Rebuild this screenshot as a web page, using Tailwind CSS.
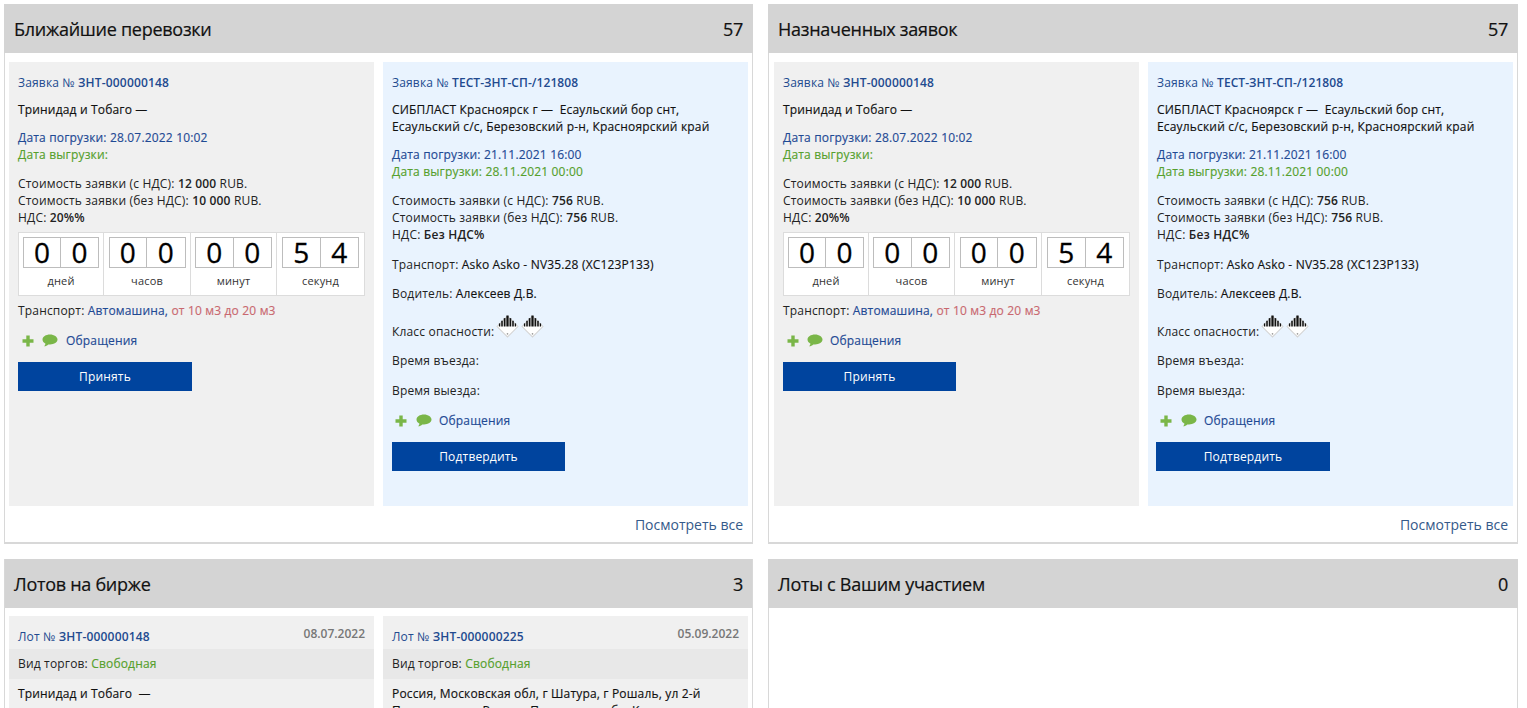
<!DOCTYPE html>
<html lang="ru">
<head>
    <meta charset="UTF-8">
    <meta name="viewport" content="width=device-width, initial-scale=1.0">
    <title>Панель</title>
    <script src="https://cdn.jsdelivr.net/npm/@tailwindcss/browser@4"></script>
</head>
<body class="bg-white h-[708px] overflow-hidden font-['Open_Sans',sans-serif] text-[12px] leading-[17px] tracking-[0.17px] text-[#222]">
    <svg class="hidden">
        <symbol id="plus" viewBox="0 0 12 12"><path d="M4.3 0.5h3.4v3.8h3.8v3.4H7.7v3.8H4.3V7.7H0.5V4.3h3.8z" fill="#7ab648"/></symbol>
        <symbol id="bubble" viewBox="0 0 16 13"><path d="M8 0.5C3.8 0.5 0.5 2.7 0.5 5.6c0 1.8 1.2 3.2 3 4.1-.2 1-.8 1.9-1.4 2.6 1.7-.2 3.1-.9 4.2-1.9.5.1 1.1.1 1.7.1 4.2 0 7.5-2.2 7.5-4.9S12.2.5 8 .5z" fill="#7ab648"/></symbol>
        <symbol id="hazard" viewBox="0 0 22 22">
            <path d="M11 1L21 11L11 21L1 11Z" fill="#fff" stroke="#d4d4d4" stroke-width="1"/>
            <g fill="#111">
                <rect x="9.9" y="0.5" width="2.2" height="10.5"/>
                <rect x="7.4" y="3" width="1.7" height="8"/>
                <rect x="12.9" y="3" width="1.7" height="8"/>
                <rect x="5" y="5.5" width="1.5" height="5.5"/>
                <rect x="15.5" y="5.5" width="1.5" height="5.5"/>
                <rect x="2.8" y="8" width="1.3" height="3"/>
                <rect x="17.9" y="8" width="1.3" height="3"/>
            </g>
            <circle cx="11" cy="18" r="0.8" fill="#999"/>
        </symbol>
    </svg>

    <div class="grid grid-cols-[749px_750px] gap-x-[15px] pl-[4px] pt-[4px]">
        <!-- Ближайшие перевозки -->
        <section class="h-[540px] border-x border-b-2 border-[#d8d8d8] flex flex-col">
            <header class="-mx-px h-[49px] bg-[#d4d4d4] flex items-center justify-between pl-[10px] pr-[10px] text-[18px] leading-[24px] tracking-[-0.27px] text-[#111] [-webkit-text-stroke:0.2px]">
                <h2>Ближайшие перевозки</h2><span>57</span>
            </header>
            <div class="grid grid-cols-[365px_365px] gap-x-[9px] pl-[4px] pt-[9px]">
                <article class="h-[444px] bg-[#f0f0f0] px-[9px] pt-[12px]">
                    <p class="text-[#224a8f]">Заявка № <b class="font-semibold">ЗНТ-000000148</b></p>
                    <p class="mt-[10px] text-[#111] [-webkit-text-stroke:0.15px]">Тринидад и Тобаго —</p>
                    <p class="mt-[11px] text-[#1f4a94] [-webkit-text-stroke:0.15px]">Дата погрузки: 28.07.2022 10:02</p>
                    <p class="text-[#55a02c] [-webkit-text-stroke:0.15px]">Дата выгрузки:</p>
                    <p class="mt-[12px]">Стоимость заявки (с НДС): <b class="font-semibold">12 000</b> RUB.</p>
                    <p>Стоимость заявки (без НДС): <b class="font-semibold">10 000</b> RUB.</p>
                    <p>НДС: <b class="font-semibold">20%%</b></p>
                    <div class="mt-[6px] w-[347px] h-[64px] bg-white border border-[#dcdcdc] grid grid-cols-[85px_87px_86px_87px] divide-x divide-[#dcdcdc]">
                        <div class="flex flex-col items-center pt-[4px]">
                            <div class="w-[76px] h-[31px] border border-[#bdbdbd] grid grid-cols-2 divide-x divide-[#bdbdbd] text-center text-[28px] leading-[29px] text-black [-webkit-text-stroke:0.3px]"><span>0</span><span>0</span></div>
                            <span class="mt-[4px] text-[11px] text-[#333]">дней</span>
                        </div>
                        <div class="flex flex-col items-center pt-[4px]">
                            <div class="w-[77px] h-[31px] border border-[#bdbdbd] grid grid-cols-2 divide-x divide-[#bdbdbd] text-center text-[28px] leading-[29px] text-black [-webkit-text-stroke:0.3px]"><span>0</span><span>0</span></div>
                            <span class="mt-[4px] text-[11px] text-[#333]">часов</span>
                        </div>
                        <div class="flex flex-col items-center pt-[4px]">
                            <div class="w-[77px] h-[31px] border border-[#bdbdbd] grid grid-cols-2 divide-x divide-[#bdbdbd] text-center text-[28px] leading-[29px] text-black [-webkit-text-stroke:0.3px]"><span>0</span><span>0</span></div>
                            <span class="mt-[4px] text-[11px] text-[#333]">минут</span>
                        </div>
                        <div class="flex flex-col items-center pt-[4px]">
                            <div class="w-[77px] h-[31px] border border-[#bdbdbd] grid grid-cols-2 divide-x divide-[#bdbdbd] text-center text-[28px] leading-[29px] text-black [-webkit-text-stroke:0.3px]"><span>5</span><span>4</span></div>
                            <span class="mt-[4px] text-[11px] text-[#333]">секунд</span>
                        </div>
                    </div>
                    <p class="mt-[6px]">Транспорт: <span class="text-[#1f4a94] [-webkit-text-stroke:0.15px]">Автомашина,</span> <span class="text-[#c9686f] [-webkit-text-stroke:0.15px]">от 10 м3 до 20 м3</span></p>
                    <div class="mt-[13px] flex items-center h-[17px]">
                        <svg class="ml-[4px] w-[12px] h-[12px]"><use href="#plus"/></svg>
                        <svg class="ml-[8px] w-[16px] h-[13px]"><use href="#bubble"/></svg>
                        <a class="ml-[8px] text-[#1f4a94] [-webkit-text-stroke:0.15px]">Обращения</a>
                    </div>
                    <button class="mt-[13px] block w-[174px] h-[29px] bg-[#00449e] text-white">Принять</button>
                </article>
                <article class="h-[444px] bg-[#e9f3fe] px-[9px] pt-[12px]">
                    <p class="text-[#224a8f]">Заявка № <b class="font-semibold tracking-[0.06px]">ТЕСТ-ЗНТ-СП-/121808</b></p>
                    <p class="mt-[10px] text-[#111] [-webkit-text-stroke:0.15px]">СИБПЛАСТ Красноярск г —&nbsp; Есаульский бор снт,<br>Есаульский с/с, Березовский р-н, Красноярский край</p>
                    <p class="mt-[11px] text-[#1f4a94] [-webkit-text-stroke:0.15px]">Дата погрузки: 21.11.2021 16:00</p>
                    <p class="text-[#55a02c] [-webkit-text-stroke:0.15px]">Дата выгрузки: 28.11.2021 00:00</p>
                    <p class="mt-[12px]">Стоимость заявки (с НДС): <b class="font-semibold">756</b> RUB.</p>
                    <p>Стоимость заявки (без НДС): <b class="font-semibold">756</b> RUB.</p>
                    <p>НДС: <b class="font-semibold">Без НДС%</b></p>
                    <p class="mt-[13px]">Транспорт: <span class="text-[#111] [-webkit-text-stroke:0.15px]">Asko Asko - NV35.28 (ХС123Р133)</span></p>
                    <p class="mt-[12px]">Водитель: <span class="text-[#111] [-webkit-text-stroke:0.15px]">Алексеев Д.В.</span></p>
                    <div class="mt-[5px] flex items-end h-[33px]">
                        <span>Класс опасности:</span>
                        <svg class="ml-[2px] mb-[2px] w-[23px] h-[23px]"><use href="#hazard"/></svg>
                        <svg class="ml-[2px] mb-[2px] w-[23px] h-[23px]"><use href="#hazard"/></svg>
                    </div>
                    <p class="mt-[12px]">Время въезда:</p>
                    <p class="mt-[13px]">Время выезда:</p>
                    <div class="mt-[13px] flex items-center h-[17px]">
                        <svg class="ml-[3px] w-[12px] h-[12px]"><use href="#plus"/></svg>
                        <svg class="ml-[9px] w-[16px] h-[13px]"><use href="#bubble"/></svg>
                        <a class="ml-[7px] text-[#1f4a94] [-webkit-text-stroke:0.15px]">Обращения</a>
                    </div>
                    <button class="mt-[13px] block w-[173px] h-[29px] bg-[#00449e] text-white">Подтвердить</button>
                </article>
            </div>
            <a class="mt-[9px] pr-[9px] text-right text-[14px] leading-[19px] tracking-normal text-[#355a8a]">Посмотреть все</a>
        </section>

        <!-- Назначенных заявок -->
        <section class="h-[540px] border-x border-b-2 border-[#d8d8d8] flex flex-col">
            <header class="-mx-px h-[49px] bg-[#d4d4d4] flex items-center justify-between pl-[10px] pr-[10px] text-[18px] leading-[24px] tracking-[-0.27px] text-[#111] [-webkit-text-stroke:0.2px]">
                <h2>Назначенных заявок</h2><span>57</span>
            </header>
            <div class="grid grid-cols-[365px_365px] gap-x-[9px] pl-[5px] pt-[9px]">
                <article class="h-[444px] bg-[#f0f0f0] px-[9px] pt-[12px]">
                    <p class="text-[#224a8f]">Заявка № <b class="font-semibold">ЗНТ-000000148</b></p>
                    <p class="mt-[10px] text-[#111] [-webkit-text-stroke:0.15px]">Тринидад и Тобаго —</p>
                    <p class="mt-[11px] text-[#1f4a94] [-webkit-text-stroke:0.15px]">Дата погрузки: 28.07.2022 10:02</p>
                    <p class="text-[#55a02c] [-webkit-text-stroke:0.15px]">Дата выгрузки:</p>
                    <p class="mt-[12px]">Стоимость заявки (с НДС): <b class="font-semibold">12 000</b> RUB.</p>
                    <p>Стоимость заявки (без НДС): <b class="font-semibold">10 000</b> RUB.</p>
                    <p>НДС: <b class="font-semibold">20%%</b></p>
                    <div class="mt-[6px] w-[347px] h-[64px] bg-white border border-[#dcdcdc] grid grid-cols-[85px_86px_87px_87px] divide-x divide-[#dcdcdc]">
                        <div class="flex flex-col items-center pt-[4px]">
                            <div class="w-[76px] h-[31px] border border-[#bdbdbd] grid grid-cols-2 divide-x divide-[#bdbdbd] text-center text-[28px] leading-[29px] text-black [-webkit-text-stroke:0.3px]"><span>0</span><span>0</span></div>
                            <span class="mt-[4px] text-[11px] text-[#333]">дней</span>
                        </div>
                        <div class="flex flex-col items-center pt-[4px]">
                            <div class="w-[77px] h-[31px] border border-[#bdbdbd] grid grid-cols-2 divide-x divide-[#bdbdbd] text-center text-[28px] leading-[29px] text-black [-webkit-text-stroke:0.3px]"><span>0</span><span>0</span></div>
                            <span class="mt-[4px] text-[11px] text-[#333]">часов</span>
                        </div>
                        <div class="flex flex-col items-center pt-[4px]">
                            <div class="w-[77px] h-[31px] border border-[#bdbdbd] grid grid-cols-2 divide-x divide-[#bdbdbd] text-center text-[28px] leading-[29px] text-black [-webkit-text-stroke:0.3px]"><span>0</span><span>0</span></div>
                            <span class="mt-[4px] text-[11px] text-[#333]">минут</span>
                        </div>
                        <div class="flex flex-col items-center pt-[4px]">
                            <div class="w-[77px] h-[31px] border border-[#bdbdbd] grid grid-cols-2 divide-x divide-[#bdbdbd] text-center text-[28px] leading-[29px] text-black [-webkit-text-stroke:0.3px]"><span>5</span><span>4</span></div>
                            <span class="mt-[4px] text-[11px] text-[#333]">секунд</span>
                        </div>
                    </div>
                    <p class="mt-[6px]">Транспорт: <span class="text-[#1f4a94] [-webkit-text-stroke:0.15px]">Автомашина,</span> <span class="text-[#c9686f] [-webkit-text-stroke:0.15px]">от 10 м3 до 20 м3</span></p>
                    <div class="mt-[13px] flex items-center h-[17px]">
                        <svg class="ml-[4px] w-[12px] h-[12px]"><use href="#plus"/></svg>
                        <svg class="ml-[8px] w-[16px] h-[13px]"><use href="#bubble"/></svg>
                        <a class="ml-[7px] text-[#1f4a94] [-webkit-text-stroke:0.15px]">Обращения</a>
                    </div>
                    <button class="mt-[13px] block w-[173px] h-[29px] bg-[#00449e] text-white">Принять</button>
                </article>
                <article class="h-[444px] bg-[#e9f3fe] px-[9px] pt-[12px]">
                    <p class="text-[#224a8f]">Заявка № <b class="font-semibold tracking-[0.06px]">ТЕСТ-ЗНТ-СП-/121808</b></p>
                    <p class="mt-[10px] text-[#111] [-webkit-text-stroke:0.15px]">СИБПЛАСТ Красноярск г —&nbsp; Есаульский бор снт,<br>Есаульский с/с, Березовский р-н, Красноярский край</p>
                    <p class="mt-[11px] text-[#1f4a94] [-webkit-text-stroke:0.15px]">Дата погрузки: 21.11.2021 16:00</p>
                    <p class="text-[#55a02c] [-webkit-text-stroke:0.15px]">Дата выгрузки: 28.11.2021 00:00</p>
                    <p class="mt-[12px]">Стоимость заявки (с НДС): <b class="font-semibold">756</b> RUB.</p>
                    <p>Стоимость заявки (без НДС): <b class="font-semibold">756</b> RUB.</p>
                    <p>НДС: <b class="font-semibold">Без НДС%</b></p>
                    <p class="mt-[13px]">Транспорт: <span class="text-[#111] [-webkit-text-stroke:0.15px]">Asko Asko - NV35.28 (ХС123Р133)</span></p>
                    <p class="mt-[12px]">Водитель: <span class="text-[#111] [-webkit-text-stroke:0.15px]">Алексеев Д.В.</span></p>
                    <div class="mt-[5px] flex items-end h-[33px]">
                        <span>Класс опасности:</span>
                        <svg class="ml-[2px] mb-[2px] w-[23px] h-[23px]"><use href="#hazard"/></svg>
                        <svg class="ml-[2px] mb-[2px] w-[23px] h-[23px]"><use href="#hazard"/></svg>
                    </div>
                    <p class="mt-[12px]">Время въезда:</p>
                    <p class="mt-[13px]">Время выезда:</p>
                    <div class="mt-[13px] flex items-center h-[17px]">
                        <svg class="ml-[3px] w-[12px] h-[12px]"><use href="#plus"/></svg>
                        <svg class="ml-[9px] w-[16px] h-[13px]"><use href="#bubble"/></svg>
                        <a class="ml-[7px] text-[#1f4a94] [-webkit-text-stroke:0.15px]">Обращения</a>
                    </div>
                    <button class="mt-[13px] -ml-px block w-[174px] h-[29px] bg-[#00449e] text-white">Подтвердить</button>
                </article>
            </div>
            <a class="mt-[9px] pr-[9px] text-right text-[14px] leading-[19px] tracking-normal text-[#355a8a]">Посмотреть все</a>
        </section>

        <!-- Лотов на бирже -->
        <section class="mt-[15px] h-[149px] border-x border-[#d8d8d8] overflow-hidden">
            <header class="-mx-px h-[49px] bg-[#d4d4d4] flex items-center justify-between pl-[10px] pr-[10px] text-[18px] leading-[24px] tracking-[-0.27px] text-[#111] [-webkit-text-stroke:0.2px]">
                <h2>Лотов на бирже</h2><span>3</span>
            </header>
            <div class="grid grid-cols-[365px_365px] gap-x-[9px] pl-[4px] pt-[8px]">
                <article class="h-[240px] bg-[#f0f0f0]">
                    <div class="h-[33px] flex justify-between px-[9px]">
                        <p class="pt-[12px] text-[#224a8f]">Лот № <b class="font-semibold">ЗНТ-000000148</b></p>
                        <span class="pt-[9px] tracking-normal text-[#777] font-semibold">08.07.2022</span>
                    </div>
                    <p class="h-[30px] bg-[#e8e8e8] px-[9px] pt-[6px]">Вид торгов: <span class="text-[#55a02c] [-webkit-text-stroke:0.15px]">Свободная</span></p>
                    <p class="mt-[6px] px-[9px] text-[#111] [-webkit-text-stroke:0.15px]">Тринидад и Тобаго&nbsp; —</p>
                </article>
                <article class="h-[240px] bg-[#f0f0f0]">
                    <div class="h-[33px] flex justify-between px-[9px]">
                        <p class="pt-[12px] text-[#224a8f]">Лот № <b class="font-semibold">ЗНТ-000000225</b></p>
                        <span class="pt-[9px] tracking-normal text-[#777] font-semibold">05.09.2022</span>
                    </div>
                    <p class="h-[30px] bg-[#e8e8e8] px-[9px] pt-[6px]">Вид торгов: <span class="text-[#55a02c] [-webkit-text-stroke:0.15px]">Свободная</span></p>
                    <p class="mt-[6px] px-[9px] text-[#111] [-webkit-text-stroke:0.15px]">Россия, Московская обл, г Шатура, г Рошаль, ул 2-й<br>Пролетарская, Россия, Пензенская обл, Каменка</p>
                </article>
            </div>
        </section>

        <!-- Лоты с Вашим участием -->
        <section class="mt-[15px] h-[149px] border-x border-[#d8d8d8]">
            <header class="-mx-px h-[49px] bg-[#d4d4d4] flex items-center justify-between pl-[10px] pr-[10px] text-[18px] leading-[24px] tracking-[-0.27px] text-[#111] [-webkit-text-stroke:0.2px]">
                <h2>Лоты с Вашим участием</h2><span>0</span>
            </header>
        </section>
    </div>
</body>
</html>
